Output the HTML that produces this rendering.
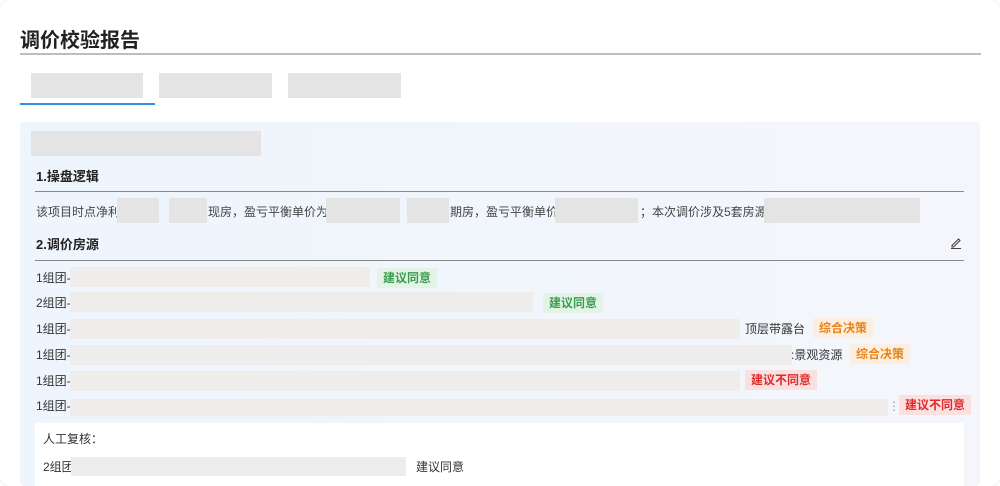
<!DOCTYPE html><html><head><meta charset="utf-8"><style>
body{margin:0;width:1000px;height:486px;background:#fff;font-family:"Liberation Sans","Noto Sans CJK SC",sans-serif;overflow:hidden;position:relative}
.card{position:absolute;left:0;top:0;width:1000px;height:486px;background:#fff;border-radius:10px;box-shadow:0 0 2px #ddd}
.a{position:absolute}
.g{position:absolute;background:#e5e4e4}
.gl{position:absolute;background:#efedec}
.t{position:absolute;font-size:12px;color:#333;white-space:nowrap;line-height:14px}
.tag{position:absolute;font-size:12px;line-height:20px;padding:0 6px;height:20px;font-weight:bold}
.gr{background:#e3f4e6;color:#3a9a4e}.or{background:#fdefe0;color:#e88418}.rd{background:#fbe0e0;color:#e02a2a}
</style></head><body><div class="card">
<div class="a" style="left:20px;top:24px;font-size:20px;font-weight:bold;color:#222">调价校验报告</div>
<div class="a" style="left:20px;top:53px;width:961px;height:2px;background:#bdbdbd"></div>
<div class="g" style="left:31px;top:73px;width:112px;height:25px"></div>
<div class="g" style="left:159px;top:73px;width:113px;height:25px"></div>
<div class="g" style="left:288px;top:73px;width:113px;height:25px"></div>
<div class="a" style="left:20px;top:103px;width:135px;height:2px;background:#3a8ee6"></div>
<div class="a" style="left:20px;top:122px;width:960px;height:364px;background:linear-gradient(90deg,#eef5fd,#f4f6fb);border-radius:4px"></div>
<div class="g" style="left:31px;top:131px;width:230px;height:25px"></div>
<div class="t" style="left:36px;top:170px;font-size:13px;font-weight:bold;color:#222">1.操盘逻辑</div>
<div class="a" style="left:35px;top:191px;width:929px;height:1px;background:#8a8a8a"></div>
<div class="t" style="left:36px;top:205px;color:#444">该项目时点净利</div>
<div class="g" style="left:117px;top:198px;width:42px;height:25px"></div>
<div class="g" style="left:169px;top:198px;width:38px;height:25px"></div>
<div class="t" style="left:208px;top:205px;color:#444">现房，盈亏平衡单价为</div>
<div class="g" style="left:326px;top:198px;width:74px;height:25px"></div>
<div class="g" style="left:407px;top:198px;width:42px;height:25px"></div>
<div class="t" style="left:450px;top:205px;color:#444">期房，盈亏平衡单价</div>
<div class="g" style="left:555px;top:198px;width:83px;height:25px"></div>
<div class="t" style="left:640px;top:205px;color:#444">；本次调价涉及5套房源</div>
<div class="g" style="left:764px;top:198px;width:156px;height:25px"></div>
<div class="t" style="left:36px;top:238px;font-size:13px;font-weight:bold;color:#222">2.调价房源</div>
<svg class="a" style="left:949px;top:236px" width="14" height="14" viewBox="0 0 14 14"><path d="M3 9.5L9.5 3l1.5 1.5L4.5 11H3z M2 12.5h10" fill="none" stroke="#444" stroke-width="1.1"/></svg>
<div class="a" style="left:35px;top:260px;width:929px;height:1px;background:#8a8a8a"></div>
<div class="t" style="left:36px;top:271px">1组团-</div><div class="gl" style="left:70px;top:267px;width:300px;height:20px"></div><div class="tag gr" style="left:377px;top:268px">建议同意</div>
<div class="t" style="left:36px;top:296px">2组团-</div><div class="gl" style="left:70px;top:292px;width:463px;height:20px"></div><div class="tag gr" style="left:543px;top:293px">建议同意</div>
<div class="t" style="left:36px;top:322px">1组团-</div><div class="gl" style="left:70px;top:319px;width:670px;height:20px"></div><div class="t" style="left:745px;top:322px">顶层带露台</div><div class="tag or" style="left:813px;top:318px">综合决策</div>
<div class="t" style="left:36px;top:348px">1组团-</div><div class="gl" style="left:70px;top:345px;width:722px;height:20px"></div><div class="t" style="left:791px;top:348px">:景观资源</div><div class="tag or" style="left:850px;top:344px">综合决策</div>
<div class="t" style="left:36px;top:374px">1组团-</div><div class="gl" style="left:70px;top:371px;width:670px;height:20px"></div><div class="tag rd" style="left:745px;top:370px">建议不同意</div>
<div class="t" style="left:36px;top:399px">1组团-</div><div class="gl" style="left:70px;top:399px;width:818px;height:17px"></div><div class="t" style="left:888px;top:399px;color:#999">⋮</div><div class="tag rd" style="left:899px;top:395px">建议不同意</div>
<div class="a" style="left:35px;top:423px;width:929px;height:63px;background:#fff"></div>
<div class="t" style="left:43px;top:432px">人工复核：</div>
<div class="t" style="left:43px;top:460px">2组团</div><div class="gl" style="left:71px;top:457px;width:335px;height:19px"></div>
<div class="t" style="left:416px;top:460px">建议同意</div>
</div></body></html>
